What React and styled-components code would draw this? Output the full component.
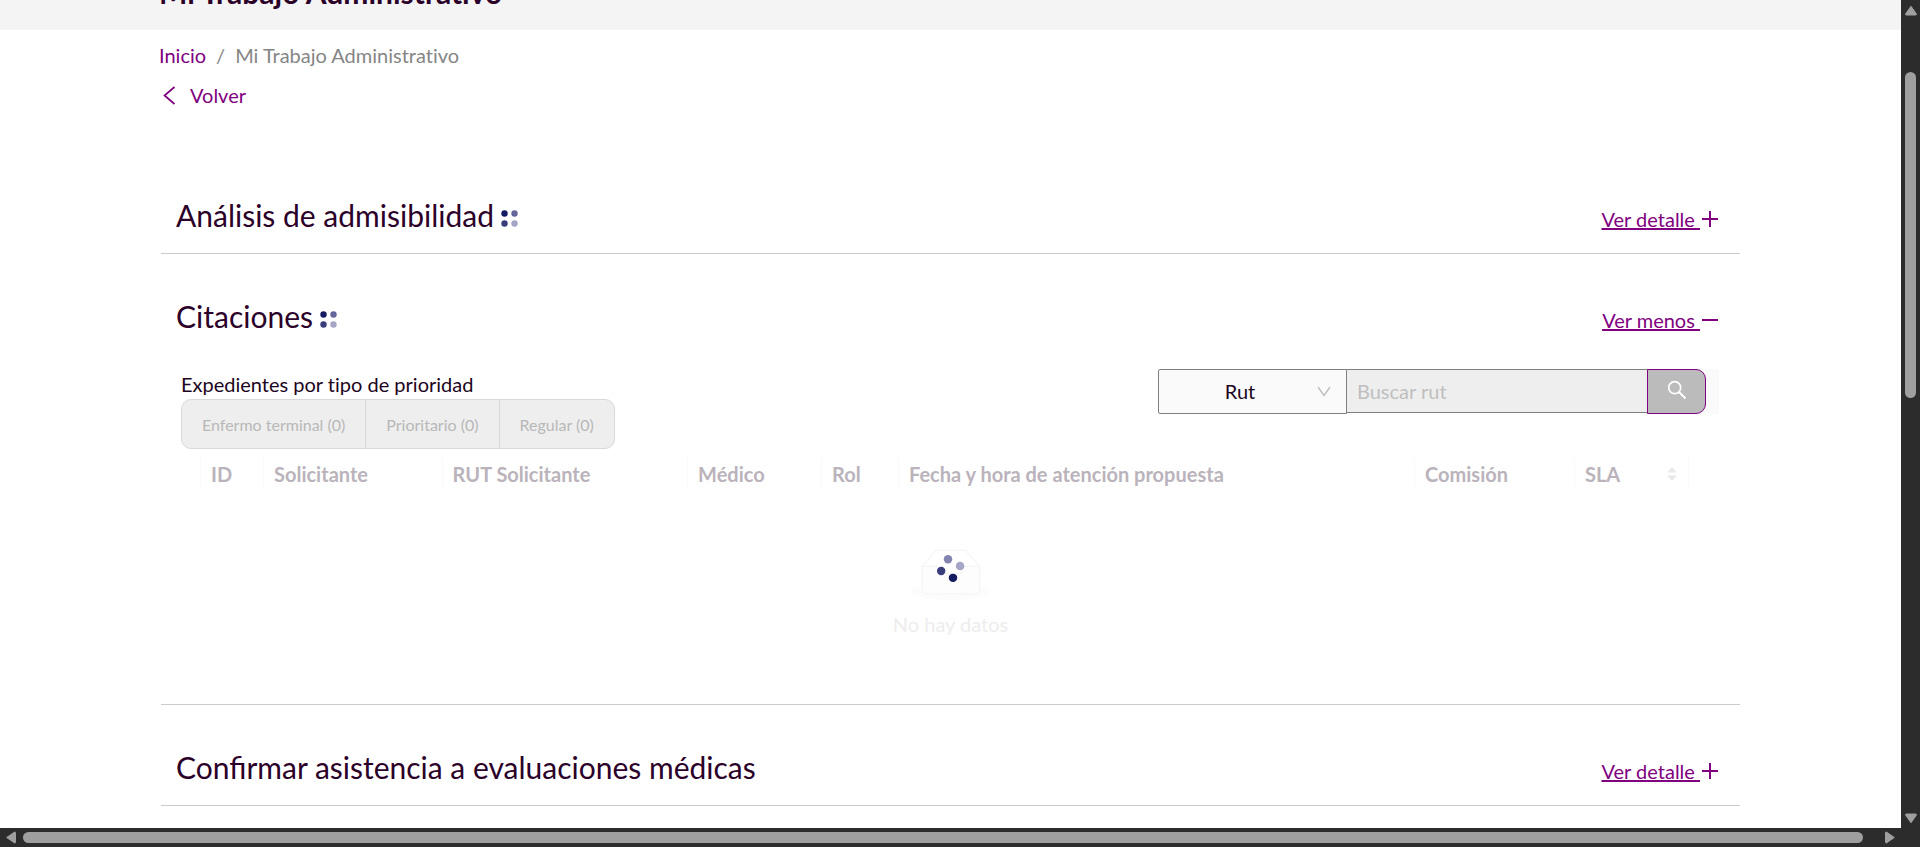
import React from "react";
import styled, { createGlobalStyle, css } from "styled-components";

const color = {
  brand: "#800080",
  ink: "#2b0029",
  muted: "#858585",
  rule: "#cccccc",
  track: "#2c2c2c",
  thumb: "#9f9f9f",
};

const GlobalStyle = createGlobalStyle`
  *, *::before, *::after { box-sizing: border-box; }
  body {
    margin: 0;
    background: #ffffff;
    color: ${color.ink};
    font: 400 20px/32px Lato, "Liberation Sans", sans-serif;
    font-variant-ligatures: none;
  }
  button, input, select { font: inherit; font-variant-ligatures: none; margin: 0; }
`;

const Shell = styled.div`
  display: grid;
  grid-template: minmax(0, 1fr) 19px / minmax(0, 1fr) 19px;
  height: 100vh;
  background: ${color.track};
`;

const Viewport = styled.div`
  display: flex;
  flex-direction: column;
  overflow: hidden;
  background: #ffffff;
`;

const TitleBand = styled.header`
  display: flex;
  align-items: flex-end;
  flex: none;
  height: 30px;
  padding: 0 159px 26px;
  background: #f4f4f4;
`;

const PageTitle = styled.h1`
  margin: 0;
  font-size: 30px;
  font-weight: 700;
  line-height: 24px;
`;

const Content = styled.div`
  flex: none;
  padding: 9px 159px 0;
`;

const Breadcrumb = styled.nav`
  display: flex;
  gap: 10px;
  color: ${color.muted};
`;

const TextLink = styled.a`
  color: ${color.brand};
  text-decoration: none;
`;

const BackLink = styled(TextLink)`
  display: inline-flex;
  align-items: center;
  gap: 14px;
  margin-top: 8px;
  padding-left: 4px;
`;

const Sections = styled.main`
  margin: 40px 2px 0;
`;

const Section = styled.section`
  padding: 16px 16px 0 15px;
  border-bottom: 1px solid ${color.rule};
`;

const SectionHeader = styled.div`
  display: flex;
  align-items: center;
  justify-content: space-between;
  height: 84px;
  padding-top: 8px;
`;

const SectionTitle = styled.h2`
  display: flex;
  align-items: center;
  gap: 6px;
  margin: 0;
  font-size: 30px;
  font-weight: 400;
  font-variant-ligatures: normal;
  line-height: 40px;
`;

const ToggleButton = styled.button`
  display: flex;
  align-items: center;
  padding: 8px 4px 0 0;
  border: 0;
  background: none;
  color: ${color.brand};
  white-space: pre;
`;

const ToggleText = styled.span`
  text-decoration: underline;
  text-decoration-thickness: 2px;
`;

const Filters = styled.div`
  display: flex;
  justify-content: space-between;
  align-items: flex-start;
  padding: 15px 5px 0 5px;
`;

const Priority = styled.fieldset`
  margin: 0;
  padding: 0;
  border: 0;
`;

const PriorityLegend = styled.legend`
  padding: 0;
  line-height: 30px;
  color: #1c0520;
`;

const PriorityGroup = styled.div`
  display: flex;
  height: 50px;
  border: 1px solid #d9d9d9;
  border-radius: 10px;
  background: #eeeeee;
`;

const PriorityButton = styled.button`
  padding: 2px 20px 0;
  border: 0;
  background: none;
  color: #b8b8b8;
  font-size: 16px;

  & + & { border-left: 1px solid #d9d9d9; }
`;

const SearchBar = styled.form`
  display: flex;
  align-items: flex-start;
  height: 45px;
  padding-right: 13px;
  background: linear-gradient(to left, #fafafa 23px, transparent 23px);
`;

const SelectBox = styled.div`
  display: grid;
  grid-template-columns: 1fr 29px;
  align-items: center;
  width: 189px;
  height: 45px;
  border: 1px solid #7f7f7f;
  border-radius: 2px 0 0 2px;
  background: #fafafa;
`;

const FieldSelect = styled.select`
  grid-area: 1 / 1 / 2 / 3;
  height: 43px;
  padding: 0 25px 2px 0;
  border: 0;
  background: none;
  color: #1c0520;
  appearance: none;
  text-align: center;
  text-align-last: center;
`;

const SelectArrow = styled.svg`
  grid-area: 1 / 2 / 2 / 3;
  pointer-events: none;
`;

const SearchInput = styled.input`
  width: 300px;
  height: 44px;
  padding: 0 10px;
  border: 1px solid #7f7f7f;
  border-width: 1px 0;
  border-radius: 0;
  background: #eeeeee;

  &::placeholder { color: #bfbfbf; opacity: 1; }
`;

const SearchButton = styled.button`
  display: grid;
  place-items: center;
  width: 59px;
  height: 45px;
  padding: 0 0 3px;
  border: 1px solid ${color.brand};
  border-radius: 0 10px 10px 0;
  background: #bbbbbb;
`;

const TableArea = styled.div`
  padding: 9px 35px 64px 24px;
`;

const Table = styled.table`
  width: 100%;
  border-collapse: collapse;
  table-layout: fixed;
`;

const HeadCell = styled.th`
  ${({ $width }) => $width && css`width: ${$width};`}
  height: 32px;
  padding: 0 10px;
  border-left: 1px solid #fafafa;
  color: #bab3bb;
  font-weight: 700;
  line-height: 32px;
  text-align: left;
  white-space: nowrap;

  &:last-child { border-right: 1px solid #fafafa; }
`;

const SortHead = styled.span`
  display: flex;
  align-items: center;
  justify-content: space-between;
`;

const EmptyCell = styled.td`
  padding: 59px 0 0 12px;
  color: #ededed;
  text-align: center;
`;

const EmptyArt = styled.svg`
  display: block;
  margin: 0 auto 8px;
`;

const VerticalBar = styled.div`
  display: flex;
  flex-direction: column;
  align-items: center;
  padding: 5px 0 4px;
`;

const VerticalTrack = styled.div`
  flex: 1;
  width: 11px;
  padding-top: 56px;
`;

const HorizontalBar = styled.div`
  display: flex;
  align-items: center;
  padding: 0 4px;
`;

const HorizontalTrack = styled.div`
  flex: 1;
  height: 11px;
  padding: 0 20px 0 5px;
`;

const Thumb = styled.div`
  height: ${({ $length }) => $length};
  border-radius: 6px;
  background: ${color.thumb};
`;

const ArrowIcon = styled.svg`
  display: block;
  flex: none;
  transform: rotate(${({ $turn }) => $turn}deg);
`;

const Arrow = ({ turn }) => (
  <ArrowIcon $turn={turn} width="14" height="11" viewBox="0 0 14 11" aria-hidden="true">
    <path
      d="M7 1.2L12.4 9Q12.6 10 11.6 10H2.4Q1.4 10 1.6 9Z"
      fill={color.thumb}
      stroke={color.thumb}
      strokeLinejoin="round"
    />
  </ArrowIcon>
);

const LoadingDots = () => (
  <svg width="18" height="24" viewBox="0 0 18 24" role="img" aria-label="Cargando">
    <circle cx="4.5" cy="10.5" r="3.2" fill="#141b61" />
    <circle cx="14.5" cy="10.5" r="3.2" fill="#64659a" />
    <circle cx="4.5" cy="20.5" r="3.2" fill="#3a3d7b" />
    <circle cx="14.5" cy="20.5" r="3.2" fill="#a5a5c6" />
  </svg>
);

const ToggleIcon = ({ open }) => (
  <svg width="20" height="20" viewBox="0 0 20 20" aria-hidden="true">
    <path d={open ? "M2 10H18" : "M2 10H18M10 2V18"} stroke={color.brand} strokeWidth="2" />
  </svg>
);

const Collapsible = ({ title, loading, open, children }) => (
  <Section>
    <SectionHeader>
      <SectionTitle>
        {title}
        {loading && <LoadingDots />}
      </SectionTitle>
      <ToggleButton type="button" aria-expanded={Boolean(open)}>
        <ToggleText>{open ? "Ver menos " : "Ver detalle "}</ToggleText>
        <ToggleIcon open={open} />
      </ToggleButton>
    </SectionHeader>
    {children}
  </Section>
);

const COLUMNS = [
  { label: "ID", width: "63px" },
  { label: "Solicitante", width: "12%" },
  { label: "RUT Solicitante", width: "16.5%" },
  { label: "Médico", width: "9%" },
  { label: "Rol", width: "77px" },
  { label: "Fecha y hora de atención propuesta" },
  { label: "Comisión", width: "160px" },
  { label: "SLA", width: "114px", sortable: true },
];

const PRIORITIES = ["Enfermo terminal (0)", "Prioritario (0)", "Regular (0)"];

const EmptyDrawing = () => (
  <EmptyArt width="80" height="51" viewBox="0 0 64 41" aria-hidden="true">
    <g transform="translate(0 1)" fill="none" fillRule="evenodd">
      <ellipse fill="#fcfcfc" cx="32" cy="33" rx="32" ry="7" />
      <g stroke="#f5f5f5">
        <path
          fill="#ffffff"
          d="M55 12.76L44.854 1.258C44.367.474 43.656 0 42.907 0H21.093c-.749 0-1.46.474-1.947 1.257L9 12.761V22h46v-9.24z"
        />
        <path
          fill="#fdfdfd"
          d="M41.613 15.931c0-1.605.994-2.93 2.227-2.931H55v18.137C55 33.26 53.68 35 52.05 35h-40.1C10.32 35 9 33.259 9 31.137V13h11.16c1.233 0 2.227 1.323 2.227 2.928v.022c0 1.605 1.005 2.901 2.237 2.901h14.752c1.232 0 2.237-1.308 2.237-2.913v-.007z"
        />
      </g>
    </g>
    <circle cx="29.6" cy="8.2" r="3.4" fill="#8384b0" />
    <circle cx="39.3" cy="13.7" r="3.4" fill="#a5a5c6" />
    <circle cx="24.1" cy="17.7" r="3.4" fill="#3a3d7b" />
    <circle cx="33.6" cy="23.2" r="3.4" fill="#141b61" />
  </EmptyArt>
);

export default function App() {
  return (
    <>
      <GlobalStyle />
      <Shell>
        <Viewport>
          <TitleBand>
            <PageTitle>Mi Trabajo Administrativo</PageTitle>
          </TitleBand>
          <Content>
            <Breadcrumb aria-label="Ruta">
              <TextLink href="#inicio">Inicio</TextLink>
              <span>/</span>
              <span>Mi Trabajo Administrativo</span>
            </Breadcrumb>
            <BackLink href="#volver">
              <svg width="13" height="20" viewBox="0 0 13 20" aria-hidden="true">
                <path d="M11.5 2L1.5 10.5L11.5 19" fill="none" stroke={color.brand} strokeWidth="1.7" />
              </svg>
              Volver
            </BackLink>
            <Sections>
              <Collapsible title="Análisis de admisibilidad" loading />
              <Collapsible title="Citaciones" loading open>
                <Filters>
                  <Priority>
                    <PriorityLegend>Expedientes por tipo de prioridad</PriorityLegend>
                    <PriorityGroup>
                      {PRIORITIES.map((label) => (
                        <PriorityButton key={label} type="button" disabled>
                          {label}
                        </PriorityButton>
                      ))}
                    </PriorityGroup>
                  </Priority>
                  <SearchBar onSubmit={(event) => event.preventDefault()}>
                    <SelectBox>
                      <FieldSelect aria-label="Buscar por" defaultValue="Rut">
                        <option>Rut</option>
                      </FieldSelect>
                      <SelectArrow width="14" height="11" viewBox="0 0 14 11" aria-hidden="true">
                        <path d="M1 1L7 9.5L13 1" fill="none" stroke="#bfbfbf" strokeWidth="1.4" />
                      </SelectArrow>
                    </SelectBox>
                    <SearchInput type="text" placeholder="Buscar rut" aria-label="Buscar rut" disabled />
                    <SearchButton type="submit" aria-label="Buscar" disabled>
                      <svg width="20" height="20" viewBox="0 0 20 20" aria-hidden="true">
                        <circle cx="7.7" cy="7.7" r="6" fill="none" stroke="#ffffff" strokeWidth="1.7" />
                        <path d="M12 12L18.5 18.5" stroke="#ffffff" strokeWidth="2" />
                      </svg>
                    </SearchButton>
                  </SearchBar>
                </Filters>
                <TableArea>
                  <Table>
                    <thead>
                      <tr>
                        {COLUMNS.map(({ label, width, sortable }) => (
                          <HeadCell key={label} scope="col" $width={width}>
                            {sortable ? (
                              <SortHead>
                                {label}
                                <svg width="12" height="16" viewBox="0 0 12 16" aria-hidden="true">
                                  <path d="M1 6.5L6 1L11 6.5ZM1 9.5L6 15L11 9.5Z" fill="#e9e9e9" />
                                </svg>
                              </SortHead>
                            ) : (
                              label
                            )}
                          </HeadCell>
                        ))}
                      </tr>
                    </thead>
                    <tbody>
                      <tr>
                        <EmptyCell colSpan={COLUMNS.length}>
                          <EmptyDrawing />
                          No hay datos
                        </EmptyCell>
                      </tr>
                    </tbody>
                  </Table>
                </TableArea>
              </Collapsible>
              <Collapsible title="Confirmar asistencia a evaluaciones médicas" />
            </Sections>
          </Content>
        </Viewport>
        <VerticalBar aria-hidden="true">
          <Arrow turn={0} />
          <VerticalTrack>
            <Thumb $length="44%" />
          </VerticalTrack>
          <Arrow turn={180} />
        </VerticalBar>
        <HorizontalBar aria-hidden="true">
          <Arrow turn={-90} />
          <HorizontalTrack>
            <Thumb $length="11px" />
          </HorizontalTrack>
          <Arrow turn={90} />
        </HorizontalBar>
      </Shell>
    </>
  );
}
